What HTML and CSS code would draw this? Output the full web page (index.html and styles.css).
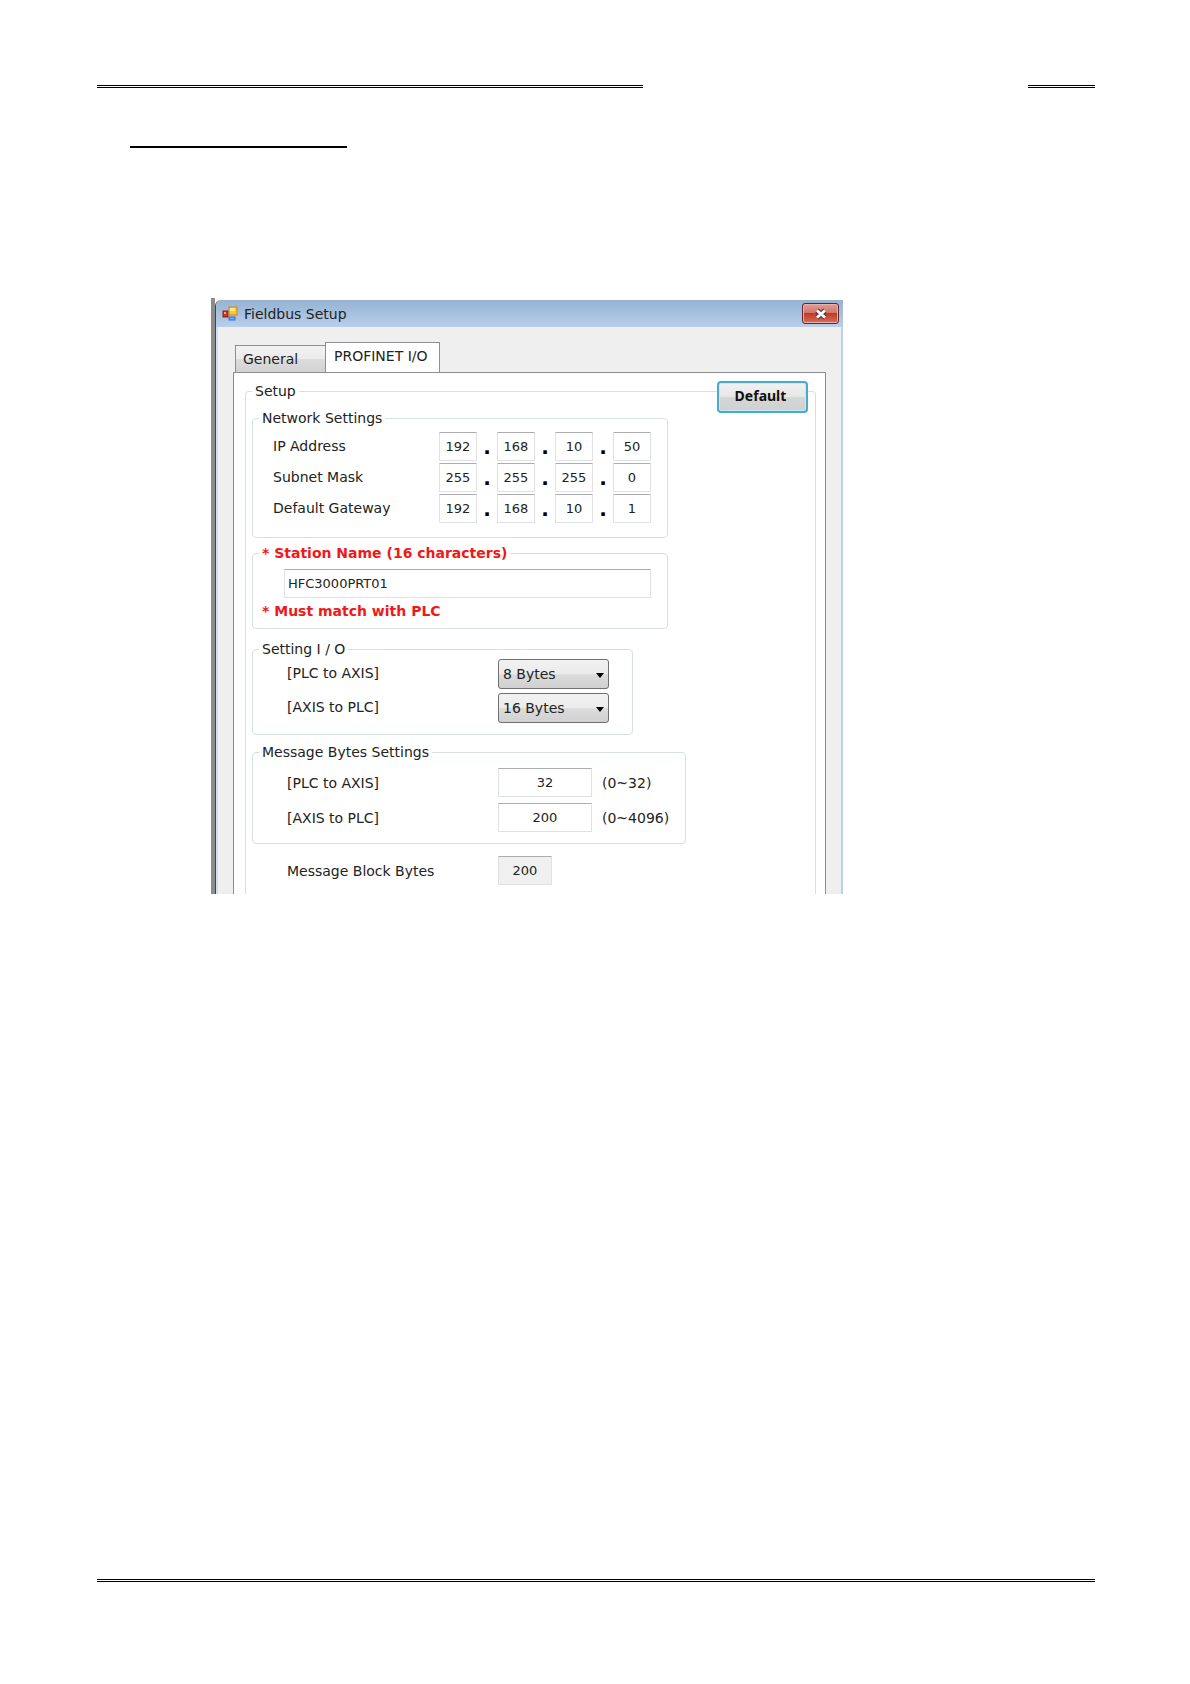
FILE: index.html
```html
<!DOCTYPE html>
<html lang="en">
<head>
  <meta charset="UTF-8">
  <meta name="viewport" content="width=device-width, initial-scale=1.0">
  <title>Fieldbus Setup</title>
  <link rel="stylesheet" href="styles.css">
</head>
<body>
  <div class="page">
    <header class="page-header">
      <div class="rule rule-long"></div>
      <div class="rule rule-short"></div>
    </header>
    <div class="heading-line"></div>

    <main class="dialog-frame">
      <div class="dialog">
        <div class="title-bar">
          <svg class="app-icon" width="16" height="16" viewBox="0 0 16 16" aria-hidden="true">
            <rect x="1" y="5" width="5" height="6" fill="#c8392b" stroke="#8a2018"/>
            <rect x="2" y="6" width="2" height="2" fill="#f0a090"/>
            <rect x="7" y="1" width="8" height="8" fill="#f7c92f" stroke="#c98a12"/>
            <rect x="8" y="2" width="5" height="3" fill="#fde98a"/>
            <rect x="7" y="11" width="6" height="3" fill="#6fa2f2" stroke="#3f6fd0"/>
          </svg>
          <span class="title">Fieldbus Setup</span>
          <button type="button" class="close" aria-label="Close">
            <svg width="14" height="12" viewBox="0 0 14 12" aria-hidden="true">
              <path d="M3 2.5 L11 9.5 M11 2.5 L3 9.5" stroke="#5b3a48" stroke-width="5"/>
              <path d="M3 2.5 L11 9.5 M11 2.5 L3 9.5" stroke="#fff" stroke-width="2.8"/>
            </svg>
          </button>
        </div>

        <div class="dialog-body">
          <div class="tabs">
            <button type="button" class="tab">General</button>
            <button type="button" class="tab active">PROFINET I/O</button>
          </div>

          <form class="panel">
            <button type="button" class="default-button">Default</button>
            <fieldset class="group setup">
              <legend>Setup</legend>

              <fieldset class="group network">
                <legend>Network Settings</legend>
                <div class="row">
                  <label for="ip1">IP Address</label>
                  <input id="ip1" value="192"><span class="dot">.</span>
                  <input aria-label="IP Address 2" value="168"><span class="dot">.</span>
                  <input aria-label="IP Address 3" value="10"><span class="dot">.</span>
                  <input aria-label="IP Address 4" value="50">
                </div>
                <div class="row">
                  <label for="mask1">Subnet Mask</label>
                  <input id="mask1" value="255"><span class="dot">.</span>
                  <input aria-label="Subnet Mask 2" value="255"><span class="dot">.</span>
                  <input aria-label="Subnet Mask 3" value="255"><span class="dot">.</span>
                  <input aria-label="Subnet Mask 4" value="0">
                </div>
                <div class="row">
                  <label for="gw1">Default Gateway</label>
                  <input id="gw1" value="192"><span class="dot">.</span>
                  <input aria-label="Default Gateway 2" value="168"><span class="dot">.</span>
                  <input aria-label="Default Gateway 3" value="10"><span class="dot">.</span>
                  <input aria-label="Default Gateway 4" value="1">
                </div>
              </fieldset>

              <fieldset class="group station">
                <legend><label for="station">* Station Name (16 characters)</label></legend>
                <input id="station" value="HFC3000PRT01" maxlength="16">
                <p class="note">* Must match with PLC</p>
              </fieldset>

              <fieldset class="group setting-io">
                <legend>Setting I / O</legend>
                <div class="row">
                  <label for="io-out">[PLC to AXIS]</label>
                  <div class="select">
                    <select id="io-out"><option>8 Bytes</option><option>16 Bytes</option></select>
                  </div>
                </div>
                <div class="row">
                  <label for="io-in">[AXIS to PLC]</label>
                  <div class="select">
                    <select id="io-in"><option>8 Bytes</option><option selected>16 Bytes</option></select>
                  </div>
                </div>
              </fieldset>

              <fieldset class="group message">
                <legend>Message Bytes Settings</legend>
                <div class="row">
                  <label for="msg-out">[PLC to AXIS]</label>
                  <input id="msg-out" value="32">
                  <span class="range">(0~32)</span>
                </div>
                <div class="row">
                  <label for="msg-in">[AXIS to PLC]</label>
                  <input id="msg-in" value="200">
                  <span class="range">(0~4096)</span>
                </div>
              </fieldset>

              <div class="row block-bytes">
                <label for="block">Message Block Bytes</label>
                <input id="block" value="200" readonly>
              </div>
            </fieldset>
          </form>
        </div>
      </div>
    </main>

    <footer class="rule page-footer"></footer>
  </div>
</body>
</html>
```

FILE: styles.css
```css
* {
  margin: 0;
  padding: 0;
  box-sizing: border-box;
}

body {
  background: #fff;
  color: #222;
  font-family: "DejaVu Sans", Verdana, sans-serif;
  font-size: 14px;
  line-height: 16px;
}

button,
input,
select {
  font: inherit;
  color: inherit;
}

.page {
  display: flex;
  flex-direction: column;
  min-height: 100vh;
  padding: 85px 95px 102px 97px;
}

/* Header and footer rules */
.page-header {
  display: flex;
  justify-content: space-between;
}

.rule {
  border-top: 3px double #000;
}

.rule-long {
  width: 546px;
}

.rule-short {
  width: 67px;
}

.page-footer {
  margin-top: auto;
}

.heading-line {
  width: 217px;
  margin: 58px 0 0 33px;
  border-top: 2px solid #000;
}

/* Dialog window */
.dialog-frame {
  width: 100%;
  max-width: 632px;
  margin: 150px 0 60px 114px;
  padding-top: 2px;
  border-left: 4px solid #8c8c8c;
}

.dialog {
  border-left: 1px solid #444;
  border-radius: 6px 0 0 0;
  overflow: hidden;
}

.title-bar {
  display: flex;
  align-items: center;
  gap: 6px;
  height: 27px;
  padding: 0 4px 0 6px;
  background: linear-gradient(#97b3d1, #a6c0de 50%, #b9cfec);
}

.title {
  flex: 1;
}

.close {
  display: flex;
  align-items: center;
  justify-content: center;
  width: 37px;
  height: 21px;
  border: 1px solid #5c2830;
  border-radius: 3px;
  background: linear-gradient(#e0a096, #d07468 48%, #c23a26 50%, #d8705a);
  box-shadow: inset 0 0 0 1px #e8b0a8;
}

.dialog-body {
  padding: 15px 15px 0;
  background: #efefef;
  border-left: 2px solid #cfdff2;
  border-right: 2px solid #bccfec;
}

/* Tabs */
.tabs {
  display: flex;
  align-items: flex-end;
  padding-left: 2px;
}

.tab {
  width: 90px;
  height: 27px;
  padding-left: 7px;
  border: 1px solid #8c8e94;
  border-right: 0;
  border-bottom: 0;
  background: linear-gradient(#f2f2f2, #ebebeb 50%, #dcdcdc 52%, #d2d2d2);
  text-align: left;
}

.tab.active {
  position: relative;
  width: 115px;
  height: 31px;
  margin-bottom: -1px;
  padding: 0 0 4px 8px;
  border-right: 1px solid #8c8e94;
  background: #fff;
}

.panel {
  position: relative;
  padding: 10px 9px 0 11px;
  border: 1px solid #8c8e94;
  border-bottom: 0;
  background: #fff;
}

.default-button {
  position: absolute;
  top: 8px;
  right: 17px;
  width: 91px;
  height: 32px;
  padding: 0 4px 2px 0;
  border: 2px solid #4aa9cc;
  border-radius: 4px;
  background: linear-gradient(#f2f2f2, #e6e6e6 50%, #d6d6d6 52%, #d0d0d0);
  box-shadow: inset 0 0 0 1px #c4ebf8;
  color: #111;
  font-family: "Noto Sans", sans-serif;
  font-weight: bold;
}

/* Group boxes */
.group {
  min-width: 0;
  padding: 0 6px;
  border: 1px solid #d8dfe3;
  border-radius: 4px;
}

.group legend {
  padding: 0 3px;
}

.setup {
  padding-top: 11px;
  padding-bottom: 9px;
  border-bottom: 0;
  border-radius: 4px 4px 0 0;
}

.row {
  display: flex;
  align-items: center;
}

.row label {
  flex: none;
  width: 239px;
  padding-left: 28px;
}

.group input {
  height: 29px;
  padding-bottom: 1px;
  border: 1px solid #dfe2e5;
  border-top-color: #abadb3;
  border-radius: 1px;
  background: #fff;
  font-size: 13px;
  text-align: center;
}

.network {
  display: flex;
  flex-direction: column;
  gap: 2px;
  max-width: 416px;
  padding-top: 6px;
  padding-bottom: 14px;
}

.network .row label {
  width: 180px;
  padding-left: 14px;
  padding-bottom: 2px;
}

.network input {
  width: 38px;
}

.dot {
  width: 20px;
  color: #000;
  font-size: 20px;
  font-weight: bold;
  text-align: center;
}

.station {
  max-width: 416px;
  margin-top: 7px;
  padding: 8px 16px 9px 6px;
  color: #f01818;
  font-weight: bold;
}

.station input {
  display: block;
  width: calc(100% - 25px);
  margin-left: 25px;
  padding-left: 3px;
  color: #222;
  font-weight: normal;
  text-align: left;
}

.note {
  margin-left: 3px;
  padding-top: 5px;
}

.setting-io {
  display: flex;
  flex-direction: column;
  gap: 4px;
  max-width: 381px;
  margin-top: 12px;
  padding-top: 2px;
  padding-bottom: 11px;
}

.setting-io .row label {
  padding-bottom: 2px;
}

.select {
  position: relative;
  width: 111px;
}

.select select {
  display: block;
  appearance: none;
  width: 100%;
  height: 30px;
  padding-left: 4px;
  border: 1px solid #707070;
  border-radius: 3px;
  background: linear-gradient(#f2f2f2, #ebebeb 50%, #dcdcdc 52%, #d0d0d0);
}

.select::after {
  content: "";
  position: absolute;
  top: 14px;
  right: 5px;
  border: 4px solid transparent;
  border-top: 5px solid #000;
  border-bottom: 0;
  pointer-events: none;
}

.message {
  display: flex;
  flex-direction: column;
  gap: 6px;
  max-width: 434px;
  margin-top: 9px;
  padding-top: 8px;
  padding-bottom: 11px;
}

.message input {
  width: 94px;
}

.range {
  margin-left: 10px;
}

.block-bytes {
  margin-top: 12px;
  padding-left: 7px;
}

.block-bytes input {
  width: 54px;
  background: #f0f0f0;
}
```
